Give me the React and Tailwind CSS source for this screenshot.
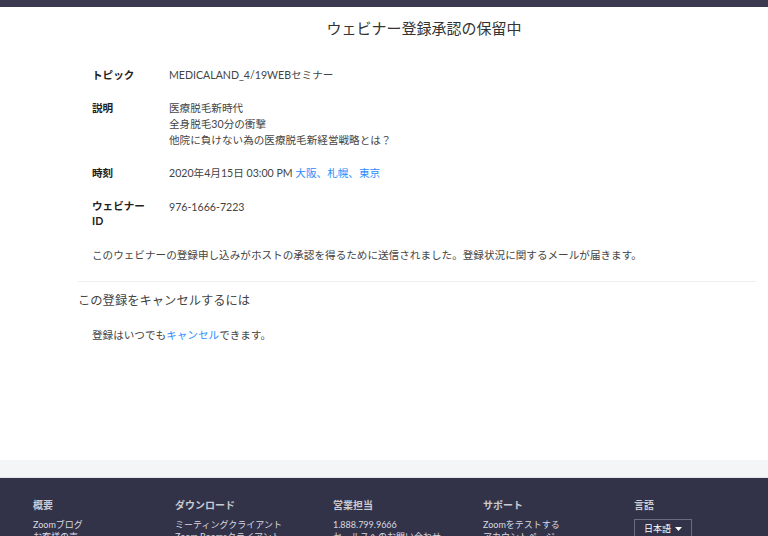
const font = { fontFamily: '"Lato", "Noto Sans CJK JP", sans-serif' }

const rows = [
  { label: 'トピック', value: ['MEDICALAND_4/19WEBセミナー'] },
  { label: '説明', value: ['医療脱毛新時代', '全身脱毛30分の衝撃', '他院に負けない為の医療脱毛新経営戦略とは？'] },
]

const footerCols = [
  { title: '概要', items: ['Zoomブログ', 'お客様の声', 'Zoomについて'], w: 'w-[142px]' },
  { title: 'ダウンロード', items: ['ミーティングクライアント', 'Zoom Roomsクライアント', 'ブラウザ拡張機能'], w: 'w-[158px]' },
  { title: '営業担当', items: ['1.888.799.9666', 'セールスへのお問い合わせ', 'プランと価格'], w: 'w-[150px]' },
  { title: 'サポート', items: ['Zoomをテストする', 'アカウントページ', 'サポートセンター'], w: 'w-[151px]' },
]

const App = () => {
  return (
    <div className="min-h-screen bg-white text-[#333]" style={font}>
      <div className="h-[7px] bg-[#393a50]" />

      <main className="h-[453px] pl-[78px] pr-[12px]">
        <h1 className="pt-[4px] pl-[14px] text-center text-[15px] leading-[34px] text-[#333]">
          ウェビナー登録承認の保留中
        </h1>

        <div className="pl-[14px] pt-[22px] text-[10.6px] leading-[16px]">
          {rows.map(row => (
            <div key={row.label} className="flex mb-[17px]">
              <div className="w-[77px] font-bold text-[#222]">{row.label}</div>
              <div className="text-[#444]">
                {row.value.map(v => <div key={v}>{v}</div>)}
              </div>
            </div>
          ))}
          <div className="flex mb-[18px]">
            <div className="w-[77px] font-bold text-[#222]">時刻</div>
            <div className="text-[#444]">
              2020年4月15日 03:00 PM <span className="text-[#2d8cff]">大阪、札幌、東京</span>
            </div>
          </div>
          <div className="flex mb-[18px]">
            <div className="w-[77px] font-bold text-[#222] leading-[15px]">ウェビナー<br />ID</div>
            <div className="text-[#444]">976-1666-7223</div>
          </div>
          <p className="text-[#444]">
            このウェビナーの登録申し込みがホストの承認を得るために送信されました。登録状況に関するメールが届きます。
          </p>
        </div>

        <div className="mt-[18px] border-t border-[#eeeeee]" />

        <h2 className="mt-[10px] text-[12.3px] leading-[18px] text-[#444]">この登録をキャンセルするには</h2>
        <p className="mt-[17px] pl-[14px] text-[10.6px] leading-[16px] text-[#444]">
          登録はいつでも<span className="text-[#2d8cff]">キャンセル</span>できます。
        </p>
      </main>

      <div className="h-[18px] bg-[#f4f5f7] border-b border-[#e3e4ea]" />

      <footer className="bg-[#323348] pt-[20px] pb-[20px] pl-[33px] text-[9px] text-[#d8d9e0]">
        <div className="flex">
          {footerCols.map(col => (
            <div key={col.title} className={col.w}>
              <div className="text-[10px] font-bold text-[#c9cad3] leading-[14px]">{col.title}</div>
              <div className="mt-[7px] leading-[12px]">
                {col.items.map(i => <div key={i}>{i}</div>)}
              </div>
            </div>
          ))}
          <div>
            <div className="text-[10px] font-bold text-[#c9cad3] leading-[14px]">言語</div>
            <button className="mt-[7px] w-[58px] h-[20px] border border-[#6b6c80] text-[9px] text-white flex items-center justify-center gap-[4px]">
              日本語
              <svg width="7" height="4" viewBox="0 0 7 4"><path d="M0 0h7L3.5 4z" fill="#ffffff" /></svg>
            </button>
          </div>
        </div>
      </footer>
    </div>
  )
}

export default App
